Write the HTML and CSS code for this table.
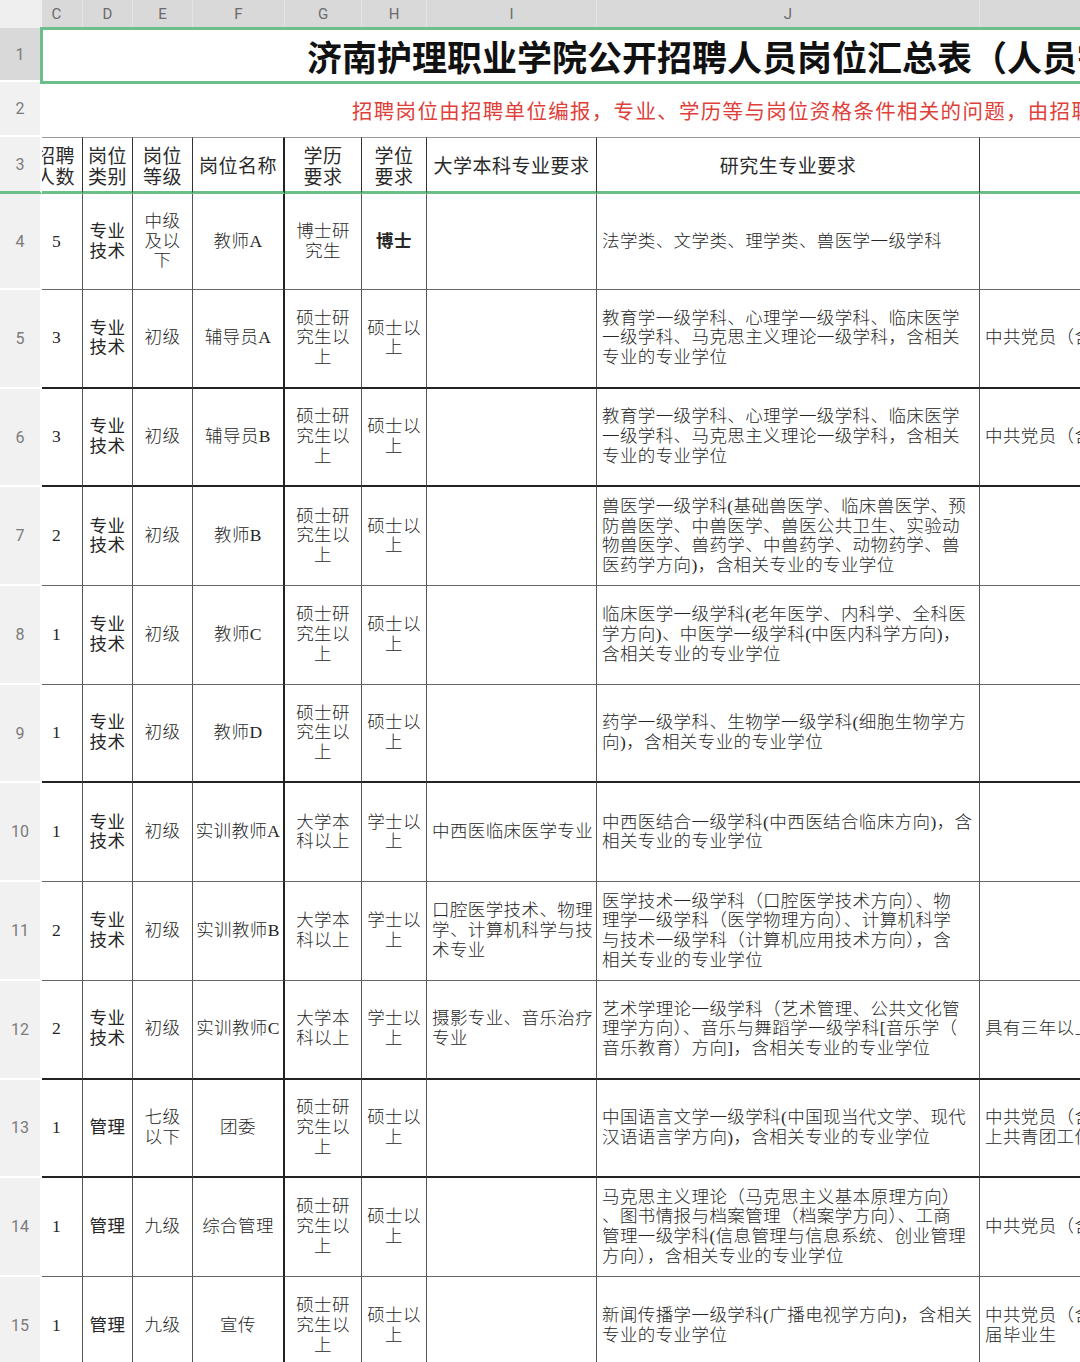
FILE: index.html
```html
<!DOCTYPE html>
<html lang="zh-CN">
<head>
<meta charset="utf-8">
<title>济南护理职业学院公开招聘人员岗位汇总表</title>
<link rel="stylesheet" href="styles.css">
</head>
<body>
<div class="sheet">
  <div class="corner"></div>
  <div class="colhdr cc">C</div>
  <div class="colhdr">D</div>
  <div class="colhdr">E</div>
  <div class="colhdr">F</div>
  <div class="colhdr">G</div>
  <div class="colhdr">H</div>
  <div class="colhdr">I</div>
  <div class="colhdr">J</div>
  <div class="colhdr"></div>

  <div class="g sel">1</div>
  <div class="title">济南护理职业学院公开招聘人员岗位汇总表（人员需求计划）</div>

  <div class="g">2</div>
  <div class="note">招聘岗位由招聘单位编报，专业、学历等与岗位资格条件相关的问题，由招聘单位负责解释</div>

  <div class="g hd">3</div>
  <div class="h cc">招聘<br>人数</div>
  <div class="h">岗位<br>类别</div>
  <div class="h">岗位<br>等级</div>
  <div class="h f">岗位名称</div>
  <div class="h">学历<br>要求</div>
  <div class="h">学位<br>要求</div>
  <div class="h">大学本科专业要求</div>
  <div class="h">研究生专业要求</div>
  <div class="h"></div>

  <div class="row">
    <div class="g">4</div>
    <div class="c cc">5</div>
    <div class="c d">专业<br>技术</div>
    <div class="c">中级<br>及以<br>下</div>
    <div class="c f">教师A</div>
    <div class="c">博士研<br>究生</div>
    <div class="c"><b>博士</b></div>
    <div class="c l"></div>
    <div class="c l">法学类、文学类、理学类、兽医学一级学科</div>
    <div class="c l"></div>
  </div>

  <div class="row tb">
    <div class="g">5</div>
    <div class="c cc">3</div>
    <div class="c d">专业<br>技术</div>
    <div class="c">初级</div>
    <div class="c f">辅导员A</div>
    <div class="c">硕士研<br>究生以<br>上</div>
    <div class="c">硕士以<br>上</div>
    <div class="c l"></div>
    <div class="c l">教育学一级学科、心理学一级学科、临床医学<br>一级学科、马克思主义理论一级学科，含相关<br>专业的专业学位</div>
    <div class="c l">中共党员（含预备党员）</div>
  </div>

  <div class="row tb">
    <div class="g">6</div>
    <div class="c cc">3</div>
    <div class="c d">专业<br>技术</div>
    <div class="c">初级</div>
    <div class="c f">辅导员B</div>
    <div class="c">硕士研<br>究生以<br>上</div>
    <div class="c">硕士以<br>上</div>
    <div class="c l"></div>
    <div class="c l">教育学一级学科、心理学一级学科、临床医学<br>一级学科、马克思主义理论一级学科，含相关<br>专业的专业学位</div>
    <div class="c l">中共党员（含预备党员）</div>
  </div>

  <div class="row">
    <div class="g">7</div>
    <div class="c cc">2</div>
    <div class="c d">专业<br>技术</div>
    <div class="c">初级</div>
    <div class="c f">教师B</div>
    <div class="c">硕士研<br>究生以<br>上</div>
    <div class="c">硕士以<br>上</div>
    <div class="c l"></div>
    <div class="c l">兽医学一级学科(基础兽医学、临床兽医学、预<br>防兽医学、中兽医学、兽医公共卫生、实验动<br>物兽医学、兽药学、中兽药学、动物药学、兽<br>医药学方向)，含相关专业的专业学位</div>
    <div class="c l"></div>
  </div>

  <div class="row">
    <div class="g">8</div>
    <div class="c cc">1</div>
    <div class="c d">专业<br>技术</div>
    <div class="c">初级</div>
    <div class="c f">教师C</div>
    <div class="c">硕士研<br>究生以<br>上</div>
    <div class="c">硕士以<br>上</div>
    <div class="c l"></div>
    <div class="c l">临床医学一级学科(老年医学、内科学、全科医<br>学方向)、中医学一级学科(中医内科学方向)，<br>含相关专业的专业学位</div>
    <div class="c l"></div>
  </div>

  <div class="row tb">
    <div class="g">9</div>
    <div class="c cc">1</div>
    <div class="c d">专业<br>技术</div>
    <div class="c">初级</div>
    <div class="c f">教师D</div>
    <div class="c">硕士研<br>究生以<br>上</div>
    <div class="c">硕士以<br>上</div>
    <div class="c l"></div>
    <div class="c l">药学一级学科、生物学一级学科(细胞生物学方<br>向)，含相关专业的专业学位</div>
    <div class="c l"></div>
  </div>

  <div class="row">
    <div class="g">10</div>
    <div class="c cc">1</div>
    <div class="c d">专业<br>技术</div>
    <div class="c">初级</div>
    <div class="c f">实训教师A</div>
    <div class="c">大学本<br>科以上</div>
    <div class="c">学士以<br>上</div>
    <div class="c l">中西医临床医学专业</div>
    <div class="c l">中西医结合一级学科(中西医结合临床方向)，含<br>相关专业的专业学位</div>
    <div class="c l"></div>
  </div>

  <div class="row">
    <div class="g">11</div>
    <div class="c cc">2</div>
    <div class="c d">专业<br>技术</div>
    <div class="c">初级</div>
    <div class="c f">实训教师B</div>
    <div class="c">大学本<br>科以上</div>
    <div class="c">学士以<br>上</div>
    <div class="c l">口腔医学技术、物理<br>学、计算机科学与技<br>术专业</div>
    <div class="c l">医学技术一级学科（口腔医学技术方向）、物<br>理学一级学科（医学物理方向）、计算机科学<br>与技术一级学科（计算机应用技术方向），含<br>相关专业的专业学位</div>
    <div class="c l"></div>
  </div>

  <div class="row tb">
    <div class="g">12</div>
    <div class="c cc">2</div>
    <div class="c d">专业<br>技术</div>
    <div class="c">初级</div>
    <div class="c f">实训教师C</div>
    <div class="c">大学本<br>科以上</div>
    <div class="c">学士以<br>上</div>
    <div class="c l">摄影专业、音乐治疗<br>专业</div>
    <div class="c l">艺术学理论一级学科（艺术管理、公共文化管<br>理学方向）、音乐与舞蹈学一级学科[音乐学（<br>音乐教育）方向]，含相关专业的专业学位</div>
    <div class="c l">具有三年以上相关工作经历</div>
  </div>

  <div class="row tb">
    <div class="g">13</div>
    <div class="c cc">1</div>
    <div class="c d">管理</div>
    <div class="c">七级<br>以下</div>
    <div class="c f">团委</div>
    <div class="c">硕士研<br>究生以<br>上</div>
    <div class="c">硕士以<br>上</div>
    <div class="c l"></div>
    <div class="c l">中国语言文学一级学科(中国现当代文学、现代<br>汉语语言学方向)，含相关专业的专业学位</div>
    <div class="c l">中共党员（含预备党员），具有一年以<br>上共青团工作经历</div>
  </div>

  <div class="row">
    <div class="g">14</div>
    <div class="c cc">1</div>
    <div class="c d">管理</div>
    <div class="c">九级</div>
    <div class="c f">综合管理</div>
    <div class="c">硕士研<br>究生以<br>上</div>
    <div class="c">硕士以<br>上</div>
    <div class="c l"></div>
    <div class="c l">马克思主义理论（马克思主义基本原理方向）<br>、图书情报与档案管理（档案学方向）、工商<br>管理一级学科(信息管理与信息系统、创业管理<br>方向），含相关专业的专业学位</div>
    <div class="c l">中共党员（含预备党员）</div>
  </div>

  <div class="row">
    <div class="g">15</div>
    <div class="c cc">1</div>
    <div class="c d">管理</div>
    <div class="c">九级</div>
    <div class="c f">宣传</div>
    <div class="c">硕士研<br>究生以<br>上</div>
    <div class="c">硕士以<br>上</div>
    <div class="c l"></div>
    <div class="c l">新闻传播学一级学科(广播电视学方向)，含相关<br>专业的专业学位</div>
    <div class="c l">中共党员（含预备党员），应<br>届毕业生</div>
  </div>

  <div class="selbox"></div>
</div>
</body>
</html>
```

FILE: styles.css
```css
* { box-sizing: border-box; }
html, body { margin: 0; padding: 0; }
body {
  width: 1080px;
  height: 1362px;
  overflow: hidden;
  background: #fff;
  font-family: "Liberation Serif", "Noto Sans CJK SC", serif;
}
.sheet {
  position: relative;
  display: grid;
  grid-template-columns: 42px 41px 50px 60px 92px 77px 65px 170px 383px 200px;
  grid-template-rows: 28px 54px 55px 57px 96px repeat(11, 98.7px);
  width: 1180px;
}
.row { display: contents; }

.corner { background: #efefef; }
.colhdr {
  background: #d9d9d9;
  color: #6b6b6b;
  font-family: Roboto, "Noto Sans", sans-serif;
  font-size: 15px;
  display: flex;
  align-items: center;
  justify-content: center;
  border-right: 1px solid #e4e4e4;
}
.colhdr.cc { padding-right: 11px; }

.g {
  background: #f1f1f1;
  border-right: 2px solid #fff;
  border-bottom: 2px solid #fff;
  color: #7b7b7b;
  font-family: Roboto, "Noto Sans", sans-serif;
  font-size: 16px;
  display: flex;
  align-items: center;
  justify-content: center;
}
.g.sel { background: #d9d9d9; }
.g.hd { border-bottom: 3px solid #6cbf88; }

.title {
  grid-column: 2 / -1;
  display: flex;
  align-items: center;
  padding-left: 265px;
  font-family: "Noto Sans CJK SC", sans-serif;
  font-weight: 700;
  font-size: 35px;
  color: #111;
  white-space: nowrap;
  overflow: hidden;
}
.note {
  grid-column: 2 / -1;
  display: flex;
  align-items: center;
  padding-left: 310px;
  font-family: "Noto Sans CJK SC", sans-serif;
  font-size: 20.5px;
  letter-spacing: 1.3px;
  color: #e0403a;
  white-space: nowrap;
  overflow: hidden;
}
.selbox {
  position: absolute;
  left: 40px;
  top: 27px;
  width: 1100px;
  height: 57px;
  border: 3px solid #6cbf88;
  pointer-events: none;
}

.h {
  border-top: 1px solid #9a9a9a;
  border-right: 1px solid #333;
  border-bottom: 3px solid #6cbf88;
  font-family: "Noto Sans CJK SC", sans-serif;
  font-size: 19px;
  letter-spacing: 0.5px;
  line-height: 21px;
  color: #2a2a2a;
  display: flex;
  align-items: center;
  justify-content: center;
  text-align: center;
  white-space: nowrap;
  overflow: hidden;
}

.c {
  border-right: 1px solid #555;
  border-bottom: 1px solid #666;
  display: flex;
  align-items: center;
  justify-content: center;
  text-align: center;
  font-size: 17.5px;
  letter-spacing: 0.4px;
  line-height: 19.7px;
  font-weight: 300;
  color: #262626;
  white-space: nowrap;
  overflow: hidden;
}
.c b { font-weight: 700; }
.c.d { font-weight: 400; }
.c.l {
  justify-content: flex-start;
  text-align: left;
  padding-left: 5px;
}
.cc { padding-right: 11px; }
.h.cc { padding-right: 13px; }
.f { border-right: 2px solid #222; }
.tb > .c { border-bottom: 2px solid #222; }
```
